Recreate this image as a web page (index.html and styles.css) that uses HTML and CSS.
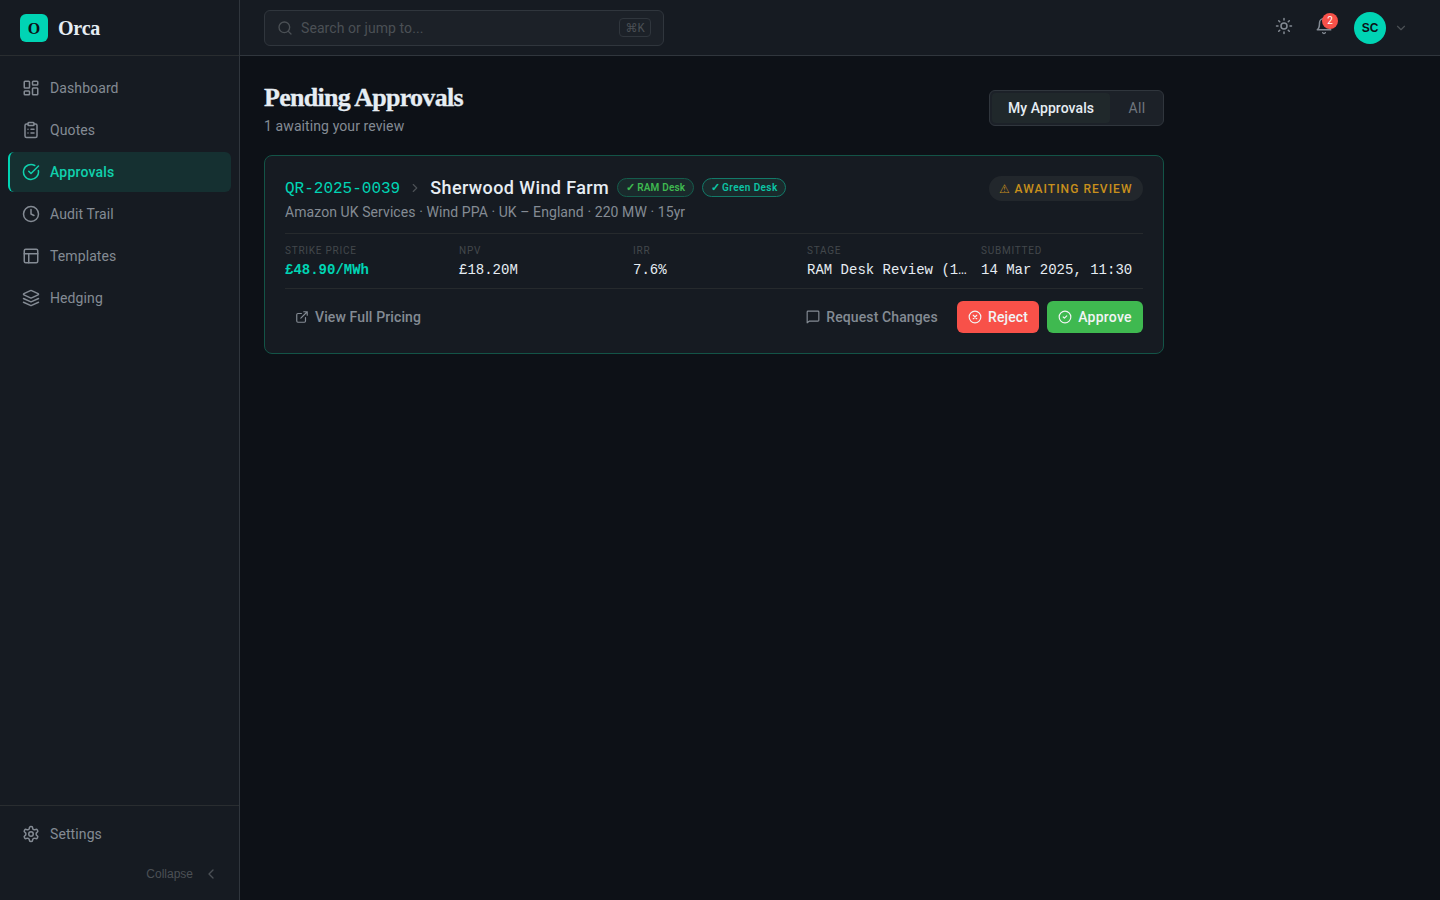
FILE: index.html
```html
<!DOCTYPE html>
<html lang="en">
<head>
<meta charset="utf-8">
<title>Orca – Pending Approvals</title>
<link rel="stylesheet" href="styles.css">
</head>
<body>
<div class="app">
  <aside class="sidebar">
    <div class="brand"><span class="brand-mark">O</span><span class="brand-name">Orca</span></div>
    <nav class="nav">
      <a class="nav-item"><svg class="icon" viewBox="0 0 24 24"><rect x="3" y="3" width="7" height="9" rx="1"/><rect x="14" y="3" width="7" height="5" rx="1"/><rect x="14" y="12" width="7" height="9" rx="1"/><rect x="3" y="16" width="7" height="5" rx="1"/></svg><span>Dashboard</span></a>
      <a class="nav-item"><svg class="icon" viewBox="0 0 24 24"><rect x="8" y="2" width="8" height="4" rx="1"/><path d="M16 4h2a2 2 0 0 1 2 2v14a2 2 0 0 1-2 2H6a2 2 0 0 1-2-2V6a2 2 0 0 1 2-2h2M12 11h4M12 16h4M8 11h.01M8 16h.01"/></svg><span>Quotes</span></a>
      <a class="nav-item active"><svg class="icon" viewBox="0 0 24 24"><path d="M21.8 10A10 10 0 1 1 17 3.34"/><path d="m9 11 3 3L22 4"/></svg><span>Approvals</span></a>
      <a class="nav-item"><svg class="icon" viewBox="0 0 24 24"><circle cx="12" cy="12" r="10"/><path d="M12 6v6l4 2"/></svg><span>Audit Trail</span></a>
      <a class="nav-item"><svg class="icon" viewBox="0 0 24 24"><rect x="3" y="3" width="18" height="18" rx="2"/><path d="M3 9h18M9 21V9"/></svg><span>Templates</span></a>
      <a class="nav-item"><svg class="icon" viewBox="0 0 24 24"><path d="M12.83 2.18a2 2 0 0 0-1.66 0L2.6 6.08a1 1 0 0 0 0 1.83l8.58 3.91a2 2 0 0 0 1.66 0l8.58-3.9a1 1 0 0 0 0-1.83Z"/><path d="m22 17.65-9.17 4.16a2 2 0 0 1-1.66 0L2 17.65"/><path d="m22 12.65-9.17 4.16a2 2 0 0 1-1.66 0L2 12.65"/></svg><span>Hedging</span></a>
    </nav>
    <div class="side-foot">
      <a class="nav-item"><svg class="icon" viewBox="0 0 24 24"><path d="M12.22 2h-.44a2 2 0 0 0-2 2v.18a2 2 0 0 1-1 1.73l-.43.25a2 2 0 0 1-2 0l-.15-.08a2 2 0 0 0-2.73.73l-.22.38a2 2 0 0 0 .73 2.73l.15.1a2 2 0 0 1 1 1.72v.51a2 2 0 0 1-1 1.74l-.15.09a2 2 0 0 0-.73 2.73l.22.38a2 2 0 0 0 2.73.73l.15-.08a2 2 0 0 1 2 0l.43.25a2 2 0 0 1 1 1.73V20a2 2 0 0 0 2 2h.44a2 2 0 0 0 2-2v-.18a2 2 0 0 1 1-1.73l.43-.25a2 2 0 0 1 2 0l.15.08a2 2 0 0 0 2.73-.73l.22-.39a2 2 0 0 0-.73-2.73l-.15-.08a2 2 0 0 1-1-1.74v-.5a2 2 0 0 1 1-1.74l.15-.09a2 2 0 0 0 .73-2.73l-.22-.38a2 2 0 0 0-2.73-.73l-.15.08a2 2 0 0 1-2 0l-.43-.25a2 2 0 0 1-1-1.73V4a2 2 0 0 0-2-2z"/><circle cx="12" cy="12" r="3"/></svg><span>Settings</span></a>
      <button class="collapse"><span>Collapse</span><svg class="icon i16" viewBox="0 0 24 24"><path d="m15 18-6-6 6-6"/></svg></button>
    </div>
  </aside>
  <div class="body">
    <header class="topbar">
      <div class="search">
        <svg class="icon i16" viewBox="0 0 24 24"><circle cx="11" cy="11" r="8"/><path d="m21 21-4.35-4.35"/></svg>
        <span class="placeholder">Search or jump to...</span>
        <kbd class="kbd">⌘K</kbd>
      </div>
      <div class="tools">
        <svg class="icon sun" viewBox="0 0 24 24"><circle cx="12" cy="12" r="4"/><path d="M12 2v2M12 20v2M4.93 4.93l1.41 1.41M17.66 17.66l1.41 1.41M2 12h2M20 12h2M6.34 17.66l-1.41 1.41M19.07 4.93l-1.41 1.41"/></svg>
        <span class="bell"><svg class="icon" viewBox="0 0 24 24"><path d="M6 8a6 6 0 0 1 12 0c0 7 3 9 3 9H3s3-2 3-9M10.3 21a1.94 1.94 0 0 0 3.4 0"/></svg><span class="count">2</span></span>
        <span class="avatar">SC</span>
        <svg class="icon chev" viewBox="0 0 24 24"><path d="m6 9 6 6 6-6"/></svg>
      </div>
    </header>
    <main class="main">
      <div class="page-head">
        <div>
          <h1 class="title">Pending Approvals</h1>
          <p class="subtitle">1 awaiting your review</p>
        </div>
        <div class="toggle"><button class="seg on">My Approvals</button><button class="seg all">All</button></div>
      </div>
      <article class="card">
        <div class="card-top">
          <div>
            <div class="headline">
              <span class="ref">QR-2025-0039</span>
              <svg class="icon sep" viewBox="0 0 24 24"><path d="m9 18 6-6-6-6"/></svg>
              <span class="project">Sherwood Wind Farm</span>
              <span class="pill ram"><i class="tick">✓</i><span>RAM Desk</span></span>
              <span class="pill green"><i class="tick">✓</i><span>Green Desk</span></span>
            </div>
            <p class="meta">Amazon UK Services · Wind PPA · UK – England · 220 MW · 15yr</p>
          </div>
          <span class="status"><i class="warn">⚠</i><span>AWAITING REVIEW</span></span>
        </div>
        <div class="metrics">
          <div><div class="label">STRIKE PRICE</div><div class="value price">£48.90/MWh</div></div>
          <div><div class="label">NPV</div><div class="value">£18.20M</div></div>
          <div><div class="label">IRR</div><div class="value">7.6%</div></div>
          <div><div class="label">STAGE</div><div class="value">RAM Desk Review (1…</div></div>
          <div><div class="label">SUBMITTED</div><div class="value">14 Mar 2025, 11:30</div></div>
        </div>
        <div class="actions">
          <button class="btn view"><svg class="icon i14" viewBox="0 0 24 24"><path d="M15 3h6v6M10 14 21 3M18 13v6a2 2 0 0 1-2 2H5a2 2 0 0 1-2-2V8a2 2 0 0 1 2-2h6"/></svg><span>View Full Pricing</span></button>
          <div class="decide">
            <button class="btn request"><svg class="icon i14" viewBox="0 0 24 24"><path d="M22 3.500a1.500 1.500 0 0 0-1.500-1.500h-17A1.500 1.500 0 0 0 2 3.500V22l4-3h14.500a1.500 1.500 0 0 0 1.500-1.500z"/></svg><span>Request Changes</span></button>
            <button class="btn reject"><svg class="icon i14" viewBox="0 0 24 24"><circle cx="12" cy="12" r="10"/><path d="m15 9-6 6M9 9l6 6"/></svg><span>Reject</span></button>
            <button class="btn approve"><svg class="icon i14" viewBox="0 0 24 24"><circle cx="12" cy="12" r="10"/><path d="m9 12 2 2 4-4"/></svg><span>Approve</span></button>
          </div>
        </div>
      </article>
    </main>
  </div>
</div>
</body>
</html>
```
FILE: styles.css
```css
* { box-sizing: border-box; margin: 0; padding: 0; }
body { background: #0d1117; color: #e6edf3; font: 14px/20px Roboto, "Noto Sans", sans-serif; overflow: hidden; }
button { background: none; border: 0; color: inherit; font: inherit; letter-spacing: inherit; }
i { font-style: normal; }
span { white-space: nowrap; }
.app { display: flex; height: 100vh; }
.icon { width: 18px; height: 18px; fill: none; stroke: currentColor; stroke-width: 2; stroke-linecap: round; stroke-linejoin: round; flex: none; display: block; }
.i16 { width: 16px; height: 16px; }
.i14 { width: 14px; height: 14px; }

.sidebar { width: 240px; flex: none; display: flex; flex-direction: column; background: #161b22; border-right: 1px solid #30363d; }
.brand { height: 56px; padding: 0 20px; display: flex; align-items: center; gap: 10px; border-bottom: 1px solid #292d30; font-family: "Liberation Serif", serif; font-weight: 700; }
.brand-mark { width: 28px; height: 28px; border-radius: 6px; background: #00d4b4; color: #0d1117; font-size: 16px; line-height: 29px; text-align: center; }
.brand-name { font-size: 20px; line-height: 28px; letter-spacing: -.2px; }
.nav { flex: 1; padding: 12px 8px; display: flex; flex-direction: column; gap: 2px; }
.nav-item { height: 40px; padding: 0 12px; display: flex; align-items: center; gap: 10px; border-left: 2px solid transparent; border-radius: 6px; color: #848b94; letter-spacing: .1px; }
.nav-item .icon { stroke-width: 2; }
.nav-item.active { background: #153031; color: #10d0ad; border-left-color: #00d4b4; font-weight: 500; letter-spacing: .2px; }
.side-foot { padding: 8px; border-top: 1px solid #292d30; height: 95px; }
.collapse { width: 100%; height: 40px; padding: 0 12px 0 0; display: flex; align-items: center; justify-content: flex-end; gap: 10px; color: #4b5055; font: 12px/16px "Liberation Sans", sans-serif; }

.body { flex: 1; min-width: 0; }
.topbar { height: 56px; padding: 0 32px 0 24px; display: flex; align-items: center; justify-content: space-between; background: #161b22; border-bottom: 1px solid #30363d; }
.search { width: 400px; height: 36px; padding: 0 12px; display: flex; align-items: center; gap: 8px; background: #1c2128; border: 1px solid #30363d; border-radius: 6px; color: #4b5055; }
.placeholder { flex: 1; letter-spacing: .08px; }
.kbd { width: 32px; height: 19px; border: 1px solid #30363d; border-radius: 4px; font: 12px/20px "Liberation Mono", "DejaVu Sans", monospace; text-align: center; }
.tools { display: flex; align-items: center; color: #848b94; }
.sun { margin: -4px 22px 0 0; }
.bell { position: relative; margin-right: 21px; margin-top: -4px; }
.count { position: absolute; left: 7px; top: -4px; width: 16px; height: 16px; border-radius: 50%; background: #f85149; color: #fff; font: 10px/16px Roboto, sans-serif; text-align: center; }
.avatar { width: 32px; height: 32px; border-radius: 50%; background: #00d4b4; color: #0d1117; font: 700 12px/32px "Liberation Sans", sans-serif; text-align: center; }
.chev { width: 14px; height: 14px; margin-left: 8px; color: #4b5055; }

.main { padding: 24px; }
.page-head { width: 900px; height: 75px; display: flex; justify-content: space-between; }
.title { padding-top: 1px; font: 700 26px/34px "Liberation Serif", serif; letter-spacing: -.73px; -webkit-text-stroke: .3px currentColor; }
.subtitle { margin-top: 1px; color: #848b94; letter-spacing: .1px; }
.toggle { width: 175px; height: 36px; margin-top: 10px; padding: 2px; display: flex; background: #1c2128; border: 1px solid #30363d; border-radius: 6px; }
.seg { flex: 1; color: #70767e; letter-spacing: .35px; }
.seg.on { flex: none; width: 118px; border-radius: 4px; background: #20282b; color: #e6edf3; font-weight: 500; letter-spacing: .08px; }
.seg.all { padding-left: 3px; }

.card { width: 900px; height: 199px; padding: 20px; background: #161b22; border: 1px solid #135447; border-radius: 8px; }
.card-top { height: 57px; display: flex; justify-content: space-between; align-items: flex-start; }
.headline { height: 24px; display: flex; align-items: center; }
.ref { color: #00d4b4; font: 16px/24px "Liberation Mono", monospace; padding-top: 1px; }
.sep { width: 14px; height: 14px; margin: 0 8px; color: #4b5055; }
.project { font-size: 18px; line-height: 24px; font-weight: 500; letter-spacing: .39px; }
.pill { height: 19px; margin: 0 0 1px 8px; display: flex; align-items: center; justify-content: center; gap: 2px; border: 1px solid #155c4c; border-radius: 10px; background: #1a2a2c; font-size: 10px; line-height: 17px; font-weight: 600; letter-spacing: .4px; }
.tick { font-size: 11px; }
.pill.ram { width: 77px; color: #3fb950; letter-spacing: .2px; }
.pill.green { width: 84px; color: #0cc5a5; border-color: #137a69; }
.meta { margin-top: 2px; color: #848b94; letter-spacing: .08px; }
.status { width: 154px; height: 25px; border-radius: 13px; background: #22272c; color: #c8901c; display: flex; align-items: center; justify-content: center; gap: 3px; font-size: 12px; font-weight: 500; letter-spacing: 1.05px; }
.metrics { height: 56px; padding-top: 10px; display: grid; grid-template-columns: repeat(5, 1fr); gap: 12px; border-top: 1px solid #262a2d; border-bottom: 1px solid #262a2d; }
.metrics > div { min-width: 0; }
.label { color: #43484c; font-size: 10px; line-height: 14px; letter-spacing: .75px; }
.value { margin-top: 2px; font: 14px/20px "Liberation Mono", monospace; white-space: nowrap; }
.value.price { color: #00d4b4; font-weight: 700; }
.actions { margin-top: 12px; display: flex; justify-content: space-between; }
.decide { display: flex; gap: 8px; }
.btn { height: 32px; display: flex; align-items: center; justify-content: center; gap: 6px; border-radius: 6px; font-weight: 500; color: #848b94; letter-spacing: .12px; }
.view { padding-left: 10px; }
.request { width: 154px; }
.reject { width: 82px; background: #f85149; color: #f2f4f5; }
.approve { width: 96px; background: #3fb950; color: #f2f4f5; letter-spacing: .25px; }
```
